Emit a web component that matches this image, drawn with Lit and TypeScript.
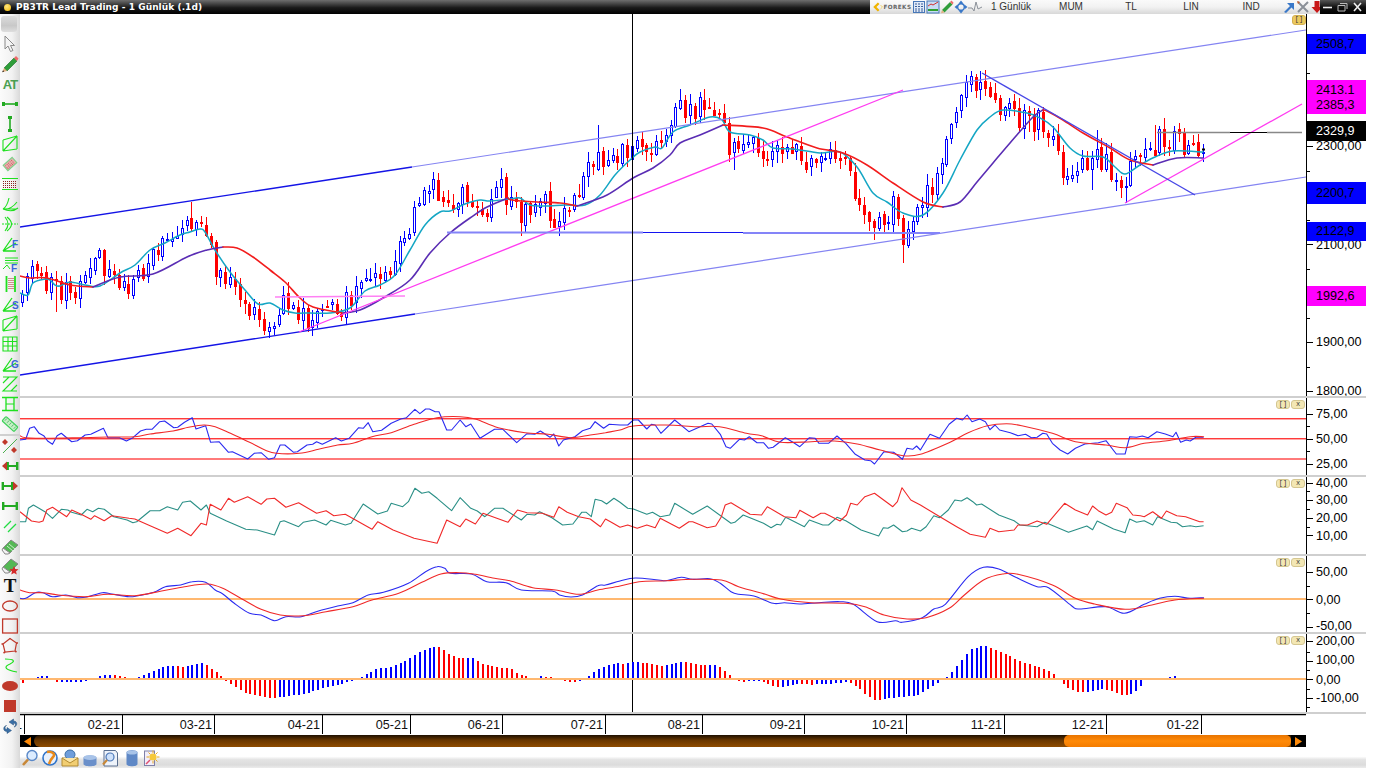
import { LitElement, html, css, svg } from "lit";
import { customElement } from "lit/decorators.js";

type P = [number, number];
const pairs = (a: number[]): P[] => { const o: P[] = []; for (let i = 0; i < a.length; i += 2) o.push([a[i], a[i + 1]]); return o; };
const zoomed = (left: number[], right: number[]): P[] => [
  ...pairs(left).map(([X, Y]) => [20 + X / 2.6133, 395 + Y / 3] as P),
  ...pairs(right).map(([X, Y]) => [620 + X / 2.6133, 395 + Y / 3] as P),
];
const pts = (a: P[]) => a.map(([x, y]) => `${x.toFixed(1)},${y.toFixed(1)}`).join(" ");
const smoothD = (a: P[]) => {
  let d = `M${a[0][0].toFixed(1)} ${a[0][1].toFixed(1)}`;
  for (let i = 0; i < a.length - 1; i++) {
    const p0 = a[Math.max(0, i - 1)], p1 = a[i], p2 = a[i + 1], p3 = a[Math.min(a.length - 1, i + 2)];
    const c1x = p1[0] + (p2[0] - p0[0]) / 6, c1y = p1[1] + (p2[1] - p0[1]) / 6;
    const c2x = p2[0] - (p3[0] - p1[0]) / 6, c2y = p2[1] - (p3[1] - p1[1]) / 6;
    d += `C${c1x.toFixed(1)} ${c1y.toFixed(1)} ${c2x.toFixed(1)} ${c2y.toFixed(1)} ${p2[0].toFixed(1)} ${p2[1].toFixed(1)}`;
  }
  return d;
};
const interp = (a: P[], x: number) => {
  if (x <= a[0][0]) return a[0][1];
  for (let i = 1; i < a.length; i++) if (x <= a[i][0]) {
    const t = (x - a[i - 1][0]) / (a[i][0] - a[i - 1][0] || 1);
    return a[i - 1][1] + t * (a[i][1] - a[i - 1][1]);
  }
  return a[a.length - 1][1];
};

const closes = pairs([20,300,27,275,35,258,50,285,60,290,75,290,85,270,100,260,110,272,130,285,145,265,165,235,180,240,195,210,205,225,215,262,235,295,250,315,270,325,285,305,300,320,320,312,345,305,365,268,385,275,400,245,415,210,430,180,445,200,452,215,465,185,480,215,500,188,520,215,540,195,560,225,575,205,590,165,600,150,612,165,625,150,640,140,650,142,662,150,675,105,690,115,707,100,722,115,730,155,745,135,765,165,785,140,800,160,820,150,845,155,860,200,875,235,895,205,905,245,915,220,930,190,945,150,955,120,965,85,985,85,995,110,1010,112,1025,120,1045,120,1060,165,1070,185,1085,165,1100,155,1110,165,1120,198,1130,165,1150,150,1165,135,1180,140,1190,155,1203,150]);
const extremes = pairs([30,252,58,312,192,202,275,335,600,125,432,172,485,235,520,236,558,233,625,127,707,92,735,170,770,175,875,240,903,263,968,75,982,73,1097,130,1125,203,1157,125,1180,130,1030,132,1092,190]);

const cyan = pairs([20,293,28,295,33,283,45,279,50,280,55,285,60,286,70,282,85,285,100,286,120,273,135,265,150,250,165,243,180,235,190,232,200,229,205,232,215,250,230,272,245,290,258,304,270,303,283,310,295,313,310,313,330,313,350,308,365,291,380,285,395,275,410,250,425,225,440,212,450,211,465,204,480,200,490,201,510,199,520,198,530,205,545,206,565,205,585,205,600,195,615,175,630,160,640,152,655,147,662,148,673,132,690,125,710,117,722,120,730,132,750,135,763,140,773,148,793,149,820,153,840,152,857,167,873,193,887,202,903,213,923,215,943,193,960,160,977,130,990,117,1003,110,1027,113,1040,118,1053,127,1070,148,1083,156,1103,157,1115,167,1125,174,1140,165,1155,157,1173,151,1203,152]);
const maAll = pairs([93,287,120,277,153,274,187,257,207,250,223,247,237,248,253,257,270,270,285,282,300,298,313,307,343,313,360,310,383,298,410,280,430,253,450,233,470,218,487,207,508,198,512,200,537,202,560,203,577,206,607,195,633,178,653,168,670,155,680,143,700,135,723,125,763,128,787,137,817,148,843,153,867,165,893,183,923,202,943,207,960,202,977,182,993,163,1010,143,1033,117,1043,110,1047,111,1063,120,1083,133,1110,148,1130,160,1153,165,1177,158,1203,158]);
const maHead = pairs([20,276,30,278,47,278,70,285,93,287]);
const redRanges: P[] = [[223, 343], [508, 577], [723, 943], [1043, 1153]];
const maSegs = () => {
  const out: { a: P[]; red: boolean }[] = [];
  const cuts = [93, ...redRanges.flat(), 1203];
  for (let i = 0; i < cuts.length - 1; i++) {
    const a = maAll.filter(([x]) => x >= cuts[i] && x <= cuts[i + 1]);
    out.push({ a, red: i % 2 === 1 });
  }
  return out;
};

const rsiB = zoomed([0,135,15,133,25,100,37,95,50,115,62,122,72,138,85,148,97,122,108,115,122,128,135,140,150,137,170,120,185,118,218,100,230,128,260,128,278,138,295,128,315,108,330,103,345,103,365,80,378,78,402,98,412,97,430,82,450,68,460,102,485,92,498,142,520,140,545,172,555,170,595,192,612,175,630,173,650,193,665,188,680,150,692,150,715,172,725,170,750,150,765,148,775,140,790,148,825,128,840,138,860,130,885,98,897,100,910,83,922,110,945,106,970,85,995,72,1010,68,1032,43,1045,56,1060,42,1070,42,1085,50,1095,50,1115,105,1128,105,1150,75,1165,95,1178,87,1202,130,1240,103,1262,103,1298,143,1325,116,1345,118,1360,108,1385,127,1395,117,1408,153,1420,135,1450,125,1470,107,1490,100,1503,80,1525,100,1540,88,1568,90],
  [0,90,20,90,35,75,48,75,70,102,82,88,92,90,107,115,143,75,180,110,230,85,240,87,262,118,277,155,288,160,312,133,325,135,338,125,358,143,375,143,388,160,400,157,432,128,452,142,470,155,495,128,510,130,520,145,545,145,567,123,590,145,615,178,640,195,655,197,665,207,690,170,715,172,738,193,750,160,765,163,775,153,785,165,810,118,835,130,860,88,880,70,895,75,907,60,920,80,940,72,955,80,967,104,980,90,992,105,1020,113,1040,122,1060,118,1075,128,1090,127,1105,115,1115,117,1130,145,1150,165,1170,177,1190,160,1215,147,1250,143,1270,137,1297,177,1320,177,1332,125,1350,127,1365,123,1380,128,1403,110,1425,117,1445,125,1453,112,1465,142,1480,135,1490,138,1505,127,1525,127]);
const rsiR = zoomed([0,122,15,128,80,130,160,128,230,126,300,125,340,117,400,108,440,97,480,90,510,95,550,115,600,142,640,165,670,175,730,175,780,163,830,150,870,145,920,125,970,113,1030,88,1090,68,1150,65,1190,72,1250,98,1320,113,1380,118,1440,128,1490,120,1530,113,1568,105],
  [35,93,120,90,200,95,260,95,330,115,370,122,420,142,500,140,560,138,620,147,680,165,740,182,785,178,860,143,910,113,960,92,1010,86,1050,92,1130,115,1190,140,1270,150,1320,158,1370,145,1430,137,1490,125,1525,125]);
const dmT = zoomed([0,380,15,380,22,340,35,330,65,350,85,370,108,343,125,345,135,352,160,360,175,343,190,350,205,340,220,343,245,365,280,375,295,383,305,380,340,347,365,347,385,335,412,345,425,322,445,318,473,345,487,330,497,355,540,378,590,403,620,405,665,420,680,380,690,377,728,395,740,382,770,375,800,390,812,376,850,390,865,385,897,327,935,357,960,348,970,325,1000,335,1015,320,1032,280,1050,295,1068,290,1090,310,1128,347,1150,308,1178,340,1195,348,1215,365,1240,340,1262,340,1310,375,1325,358,1345,360,1358,350,1390,368,1418,390,1445,387,1468,352,1480,352,1493,365,1503,313,1520,317,1533,327,1552,310,1568,322],
  [0,322,20,340,35,342,70,358,85,352,105,365,130,360,143,325,190,358,228,333,290,385,300,382,322,360,375,385,395,398,410,388,420,390,433,367,482,395,495,375,530,390,545,390,567,367,590,377,630,405,676,423,688,398,700,400,715,390,738,410,750,408,762,400,785,408,800,395,820,362,835,368,858,345,875,315,892,318,907,308,922,320,932,330,945,327,990,360,1030,377,1045,390,1090,395,1110,382,1172,412,1220,393,1235,404,1247,378,1290,402,1320,413,1332,372,1350,382,1370,377,1392,390,1405,365,1440,382,1455,383,1470,395,1490,392,1505,395,1525,392]);
const dmR = zoomed([0,350,30,378,50,382,60,378,70,345,85,337,122,365,135,345,160,358,185,373,195,362,220,377,240,362,285,370,300,372,340,392,385,415,412,400,447,422,473,385,487,390,497,328,525,345,545,310,560,322,595,305,630,328,645,312,665,310,695,337,728,323,775,355,800,347,820,362,850,358,920,403,935,380,975,405,1030,430,1090,445,1115,375,1150,395,1165,372,1190,387,1210,355,1275,382,1300,345,1325,353,1365,355,1395,367,1408,335,1430,352,1460,365,1490,372,1517,395,1530,372,1550,385,1568,397],
  [0,397,20,390,45,400,70,390,92,398,105,370,155,400,180,380,190,380,228,398,250,393,265,365,275,330,290,323,340,358,370,360,385,335,430,365,460,368,470,346,505,368,525,355,535,355,575,378,592,360,603,325,620,330,640,305,665,295,713,335,725,320,737,278,760,315,785,330,825,358,880,395,915,418,955,427,967,400,990,410,1030,405,1040,390,1065,390,1090,378,1115,388,1162,325,1190,345,1222,360,1235,333,1250,347,1270,360,1285,352,1297,325,1325,338,1340,360,1360,362,1370,365,1392,350,1415,370,1428,348,1455,362,1478,365,1515,380,1525,380]);
const macB = zoomed([0,610,15,610,40,593,60,593,85,605,120,600,150,608,175,606,215,593,240,597,285,605,305,603,350,592,380,575,420,570,450,560,485,562,510,585,530,597,560,625,600,655,630,660,665,677,695,665,735,665,780,648,830,633,870,623,910,600,950,592,1015,565,1060,530,1090,515,1110,520,1125,535,1180,537,1220,560,1270,563,1310,585,1390,588,1410,600,1440,606,1470,600,1510,572,1530,570,1568,558],
  [40,549,100,555,120,557,160,547,190,553,235,551,262,565,290,590,310,598,350,603,400,625,430,623,470,627,520,623,575,620,610,628,672,680,720,677,737,682,790,668,820,642,850,628,910,545,950,517,990,522,1040,550,1090,575,1120,578,1180,632,1200,642,1270,635,1318,655,1370,628,1410,610,1450,604,1490,610,1525,608]);
const macR = zoomed([0,585,25,593,60,593,100,600,170,605,230,598,300,602,370,588,430,575,490,567,530,580,580,612,630,643,680,660,740,662,800,650,870,635,920,615,990,595,1050,562,1100,537,1150,533,1190,538,1240,550,1280,557,1340,578,1400,585,1460,598,1510,585,1568,573],
  [50,560,120,557,190,553,265,555,310,575,380,598,420,612,500,623,590,625,640,635,690,660,750,672,800,668,860,640,900,600,950,555,1000,537,1040,538,1130,570,1190,610,1240,627,1320,643,1390,630,1450,615,1525,610]);
const histo = zoomed([0,-10,10,-8,25,0,55,6,70,6,95,-6,130,-5,150,-5,165,-5,190,0,215,10,235,10,265,5,290,0,310,4,370,32,405,38,420,34,435,34,455,40,480,45,495,32,520,12,530,0,545,-8,565,-22,590,-40,620,-48,660,-55,720,-45,735,-45,790,-25,860,-5,880,0,895,5,930,28,970,32,1010,55,1050,82,1085,94,1100,90,1125,68,1150,60,1185,60,1210,40,1250,32,1280,30,1300,14,1325,3,1340,0,1355,6,1390,3,1410,0,1430,-5,1455,-7,1470,0,1490,8,1505,25,1540,40,1568,45],
  [0,40,40,48,60,46,100,38,115,36,160,50,200,42,215,38,250,40,270,25,285,10,300,0,320,-8,340,-3,370,-3,405,-20,430,-20,460,-12,500,-14,560,-10,590,-6,610,-12,640,-42,670,-62,700,-55,780,-45,800,-30,830,-8,850,0,865,15,890,50,915,85,950,98,965,90,1000,75,1040,52,1095,32,1120,20,1135,10,1150,0,1170,-25,1205,-38,1260,-28,1280,-30,1315,-46,1340,-42,1365,-14,1375,0,1435,3,1450,6,1462,3,1475,0]).map(([x, Y]) => [x, (Y - 395) * 3] as P);

const N = 245, X0 = 22, DX = (1203 - 22) / 244;
const barX = (i: number) => Math.round(X0 + i * DX) + 0.5;

function rng(seed: number) {
  return () => {
    seed |= 0; seed = (seed + 0x6d2b79f5) | 0;
    let t = Math.imul(seed ^ (seed >>> 15), 1 | seed);
    t = (t + Math.imul(t ^ (t >>> 7), 61 | t)) ^ t;
    return ((t ^ (t >>> 14)) >>> 0) / 4294967296;
  };
}

function candles() {
  const r = rng(1937);
  let prev = interp(closes, X0 - DX);
  const out: any[] = [];
  for (let i = 0; i < N; i++) {
    const x = barX(i);
    const base = interp(closes, x);
    const close = base + (r() - 0.5) * 24;
    const open = prev + (r() - 0.5) * 5;
    let top = Math.min(open, close) - 1 - r() * 10;
    let bot = Math.max(open, close) + 1 + r() * 10;
    for (const [ex, ey] of extremes) if (Math.abs(ex - x) <= DX / 2) {
      if (ey < top) top = ey;
      if (ey > bot) bot = ey;
    }
    const up = close <= open;
    const y = Math.min(open, close), h = Math.max(1, Math.abs(open - close));
    const col = up ? "#0000ff" : "#ff0000";
    out.push(svg`<line x1=${x} x2=${x} y1=${top} y2=${bot} stroke=${col} />`);
    out.push(up
      ? svg`<rect x=${x - 1} y=${Math.round(y) + 0.5} width="2" height=${Math.round(h)} fill="#fff" stroke=${col} />`
      : svg`<rect x=${x - 1.5} y=${Math.round(y)} width="3" height=${Math.round(h) + 1} fill=${col} />`);
    prev = close;
  }
  return out;
}

function bars() {
  const out: any[] = [];
  let prev = 0;
  for (let i = 0; i < N; i++) {
    const x = barX(i);
    const v = interp(histo, x) / 3;
    const col = v >= prev ? "#0000ff" : "#ff0000";
    prev = v;
    if (Math.abs(v) < 1) continue;
    out.push(svg`<rect x=${x - 1} width="2" y=${v > 0 ? 678 - v : 680} height=${Math.abs(v)} fill=${col} />`);
  }
  return out;
}

const line = (a: P[], c: string, w = 1) => svg`<polyline points=${pts(a)} fill="none" stroke=${c} stroke-width=${w} stroke-linejoin="round" />`;
const curve = (a: P[], c: string, w = 1) => svg`<path d=${smoothD(a)} fill="none" stroke=${c} stroke-width=${w} stroke-linecap="round" />`;
const seg = (x1: number, y1: number, x2: number, y2: number, c: string, w = 1) => svg`<line x1=${x1} y1=${y1} x2=${x2} y2=${y2} stroke=${c} stroke-width=${w} />`;
const CROSS = seg(632.5, 0, 632.5, 768, "#000", 1);
const hl = (y: number, c: string, h = 1) => svg`<rect x="20" y=${y} width="1286" height=${h} fill=${c} shape-rendering="crispEdges" />`;

const mainChart = () => svg`
  <g shape-rendering="crispEdges">${candles()}</g>
  ${curve(cyan, "#14a6c4", 1.5)}
  ${curve(maHead, "#f21c1c", 1.6)}
  ${maSegs().map((s) => curve(s.a, s.red ? "#f21c1c" : "#5a2db4", 1.6))}
  ${seg(20, 227, 412, 167, "#1414e6", 1.4)} ${seg(412, 167, 1306, 30, "#8484f2", 1.2)}
  ${seg(20, 375, 415, 314, "#1414e6", 1.4)} ${seg(415, 314, 1306, 177, "#8484f2", 1.2)}
  ${seg(299, 332, 903, 90, "#ff3cf0", 1.3)} ${seg(1125, 203, 1302, 104, "#ff3cf0", 1.3)}
  ${seg(275, 297, 405, 296, "#ff80f4", 1.6)}
  ${seg(447, 232.5, 643, 232.5, "#8484f8", 2)} ${seg(643, 232.5, 743, 232.5, "#1414f0", 1)} ${seg(743, 233, 940, 233, "#8484f8", 2)}
  ${seg(982, 73, 1195, 195, "#4646e6", 1.4)}
  ${seg(1157, 132.5, 1230, 132.5, "#888", 1.6)} ${seg(1230, 132.5, 1267, 132.5, "#000", 1)} ${seg(1267, 132.5, 1302, 132.5, "#888", 1.6)}
  <rect x="1202" y="148.5" width="3" height="2" fill="#000" />
  ${CROSS}`;

const rsiChart = () => svg`
  ${hl(418, "#ff3a3a")} ${hl(419, "#ffa8a8")} ${hl(438, "#ff3a3a")} ${hl(439, "#ffa8a8")} ${hl(458, "#ff7a7a", 2)}
  ${line(rsiB, "#2a2af0", 1.1)} ${curve(rsiR, "#f02828", 1.1)} ${CROSS}`;
const dmChart = () => svg`${line(dmT, "#2a8f86", 1.1)} ${line(dmR, "#f02828", 1.1)} ${CROSS}`;
const macdChart = () => svg`
  ${hl(598, "#ffb870", 2)} ${curve(macB, "#2a2af0", 1.1)} ${curve(macR, "#f02828", 1.1)} ${CROSS}`;
const histChart = () => svg`
  ${CROSS}<g shape-rendering="crispEdges">${bars()}</g> ${hl(678, "#ffb870", 2)}`;

type Label = { y: number; t: string };
const axis = (ticks: number[], minor: number[], labels: Label[], extras: any = null) => svg`
  <line x1="1306.5" x2="1306.5" y1="0" y2="768" stroke="#000" />
  <g shape-rendering="crispEdges">
    ${ticks.map((y) => svg`<line x1="1306" x2="1313" y1=${y + 0.5} y2=${y + 0.5} stroke="#000" />`)}
    ${minor.map((y) => svg`<line x1="1306" x2="1310" y1=${y + 0.5} y2=${y + 0.5} stroke="#000" />`)}
  </g>
  ${labels.map((l) => svg`<text class="ax" x="1316" y=${l.y + 4}>${l.t}</text>`)}
  ${extras}`;

const tag = (y1: number, y2: number, bg: string, texts: [number, string][], fg = "#000") => svg`
  <rect x="1307" y=${y1} width="59" height=${y2 - y1} fill=${bg} />
  ${texts.map(([y, t]) => svg`<text class="ax" x="1316" y=${y + 4} fill=${fg}>${t}</text>`)}`;

const G = "#1fe01f", D = "#22aa22", R = "#c0392b";
const railIcons: any[] = [
  svg`<path d="M4 1 L4 14 L7 11 L9.5 16.5 L12 15.5 L9.5 10.5 L13.5 10.5 Z" fill="#f4f4f4" stroke="#8a8a8a" />`,
  svg`<path d="M3 13 L13 3 L16 6 L6 16 Z" fill="#2f9e3a" stroke="#1b6a25" stroke-width=".6" /><path d="M13 3 L15 1 L17.5 3.5 L16 6 Z" fill="#ef6a6a" /><path d="M3 13 L1.2 17.3 L6 16 Z" fill="#e2b080" /><path d="M1.2 17.3 L2 15.2 L3.2 16.6 Z" fill="#222" />`,
  svg`<text x="9" y="13.5" text-anchor="middle" font-family="Liberation Sans" font-weight="700" font-size="13" letter-spacing="-1" fill="#4a9f52">AT</text>`,
  svg`<path d="M2 9 H16" stroke=${D} stroke-width="1.6" /><rect x="1" y="7" width="3" height="4" fill=${D} /><rect x="14" y="7" width="3" height="4" fill=${D} />`,
  svg`<path d="M9 2 V16" stroke=${D} stroke-width="1.6" /><rect x="7" y="1" width="4" height="3" fill=${D} /><rect x="7" y="14" width="4" height="3" fill=${D} />`,
  svg`<path d="M2 5 L16 1 M2 16 L16 14 M2 5 V16 M2 16 L16 1 M16 1 V14" fill="none" stroke=${G} stroke-width="1.1" />`,
  svg`<g transform="rotate(-42 9 9)"><rect x="3" y="5.5" width="12" height="7" fill="#eab0b0" stroke="#7fd08a" stroke-width="1.1" /><path d="M4 7.5H14M4 9.5H14M4 11H14" stroke="#c86060" stroke-dasharray="1 1" /></g>`,
  svg`<path d="M1 3.5H17M1 14.5H17" stroke=${G} stroke-width="1.1" /><path d="M2 6.5H16M2 8.5H16M2 10.5H16M2 12.5H16" stroke="#8b2222" stroke-dasharray="1 1" />`,
  svg`<path d="M2 14 Q10 15 16 7 M2 14 Q6 12 8 3 M2 14 H16 M2 14 Q11 18 17 13" fill="none" stroke=${G} stroke-width="1.1" />`,
  svg`<path d="M4 2 Q10 9 4 16 M6 2 Q15 9 6 16 " fill="none" stroke=${G} stroke-width="1.1" /><path d="M1 9H17" stroke=${G} stroke-dasharray="2 1" />`,
  svg`<path d="M2 16 L11 3 M2 16 L15 8 M2 16 L15 16" stroke=${G} stroke-width="1.3" /><text x="11" y="13" font-family="Liberation Sans" font-weight="700" font-size="10" fill="#3a66d8">F</text>`,
  svg`<path d="M4 3H17M4 5.5H17M4 8H17" stroke=${G} stroke-width="1" /><path d="M2 14 L6 10 L9 14" fill="none" stroke=${G} /><text x="10" y="16.5" font-family="Liberation Sans" font-weight="700" font-size="10" fill="#3a66d8">F</text>`,
  svg`<path d="M5.5 1V17M14 1V17" stroke=${G} stroke-width="1.8" /><path d="M8 3V15M10 3V15M12 3V15" stroke="#b02828" stroke-dasharray="1 1" />`,
  svg`<path d="M2 16 L11 3 M2 16 L15 8 M2 16 L15 16" stroke=${G} stroke-width="1.3" /><text x="11" y="14" font-family="Liberation Sans" font-weight="700" font-size="10" fill="#3a66d8">S</text>`,
  svg`<path d="M2 5 L16 1 M2 16 L16 14 M2 5 V16 M2 16 L16 1 M16 1 V14" fill="none" stroke=${G} stroke-width="1.1" />`,
  svg`<path d="M2 2 H16 V16 H2 Z M2 6.5H16 M2 11H16 M7 2V16 M11.5 2V16" fill="none" stroke=${G} stroke-width="1.1" />`,
  svg`<path d="M2 16 L11 3 M2 16 L15 8 M2 16 L15 16" stroke=${G} stroke-width="1.3" /><text x="10" y="13" font-family="Liberation Sans" font-weight="700" font-size="10" fill="#3a66d8">G</text>`,
  svg`<path d="M2 2 H16 L2 16 H16 M2 8 L8 2 M10 16 L16 10" fill="none" stroke=${G} stroke-width="1.1" />`,
  svg`<path d="M1 2.5H17M1 15.5H17M5 2.5V15.5M13 2.5V15.5" fill="none" stroke=${G} stroke-width="1.3" /><path d="M5 9H13" stroke=${G} />`,
  svg`<g transform="rotate(42 9 9)"><rect x="1" y="6" width="16" height="6" rx="1" fill="#c4f0c4" stroke="#3fd05a" stroke-width="1.2" /><path d="M3 7V10M6 7V10M9 7V10M12 7V10M15 7V10" stroke="#3fa05a" stroke-width=".7" /></g>`,
];
const railIcons2: any[] = [
  svg`<path d="M2 16 L16 2" stroke="#4caf50" /><path d="M4 2 L7 5 L4 8 L1 5 Z M13 10 L16 13 L13 16 L10 13 Z" fill="#c0392b" />`,
  svg`<path d="M6 9H17" stroke=${D} stroke-width="2" /><rect x="15" y="5" width="2.4" height="8" fill=${D} /><rect x="5.5" y="5" width="2.4" height="8" fill=${D} /><path d="M1 9 L6 4.5 V13.5 Z" fill="#c0392b" />`,
  svg`<path d="M1 9H12" stroke=${D} stroke-width="2" /><rect x="0.6" y="5" width="2.4" height="8" fill=${D} /><rect x="10" y="5" width="2.4" height="8" fill=${D} /><path d="M17 9 L12 4.5 V13.5 Z" fill="#c0392b" />`,
  svg`<path d="M2 9H16" stroke=${D} stroke-width="2" /><rect x="1" y="5" width="2.4" height="8" fill=${D} /><rect x="14.6" y="5" width="2.4" height="8" fill=${D} />`,
  svg`<path d="M3 11 L10 4 M7 15 L15 7" stroke="#22dd44" stroke-width="1.3" />`,
  svg`<path d="M2 11 L10 3 L17 8 L9 16 Z" fill="#55b855" stroke="#888" /><path d="M2 11 L9 16 L7 17 H4 L1 13 Z" fill="#f4f4f4" stroke="#888" /><path d="M6 9L12 14M8 7L14 12" stroke="#cceecc" />`,
  svg`<path d="M2 10 L10 2 L17 7 L9 15 Z" fill="#55b855" stroke="#888" /><path d="M2 10 L9 15 L7 16 H4 L1 12 Z" fill="#f4f4f4" stroke="#888" /><path d="M13 9 L14.3 12 L17.5 12.3 L15 14.4 L15.8 17.6 L13 16 L10.2 17.6 L11 14.4 L8.5 12.3 L11.7 12 Z" fill="#d42c2c" />`,
  svg`<text x="9" y="15" text-anchor="middle" font-family="Liberation Serif" font-weight="700" font-size="19" fill="#111">T</text>`,
  svg`<ellipse cx="9" cy="9" rx="7.4" ry="5" fill="none" stroke=${R} stroke-width="1.3" />`,
  svg`<rect x="1.6" y="2" width="14.8" height="14" fill="none" stroke=${R} stroke-width="1.3" />`,
  svg`<path d="M2 7 L9 1.5 L15.5 6 L14 14 L4 15 Z" fill="none" stroke=${R} stroke-width="1.2" /><path d="M2 7 H0.5 M9 1.5 V1 M15.5 6 H17 M14 14 L15.5 15 M4 15 L2.5 16" stroke=${R} stroke-width="1.6" />`,
  svg`<path d="M4 2 C13 2 15 4 9 7 C2 10 4 13 16 15" fill="none" stroke=${G} stroke-width="1.2" />`,
  svg`<ellipse cx="9" cy="9" rx="8" ry="5" fill=${R} />`,
  svg`<rect x="3" y="3" width="12" height="12" fill=${R} />`,
  svg`<path d="M12.5 2 L8 5 L12.5 8 V6 C15 6 15 9 13 10 C16.5 9.5 17 4 12.5 4 Z M6 16.5 L10.5 13.5 L6 10.5 V12.5 C3.5 12.5 3.5 9.5 5.5 8.5 C2 9 1.5 14.5 6 14.5 Z" fill="#3a6ea5" stroke="#26517d" stroke-width=".5" />`,
];

const topIcons = html`
  <svg class="logo" viewBox="0 0 42 14"><path d="M7 3 L3 7 L7 11" fill="none" stroke="#f0b400" stroke-width="2.4" /><path d="M9 5 L11 7 L9 9" fill="none" stroke="#f0d060" stroke-width="1" /><text x="12" y="9.5" font-family="DejaVu Sans" font-weight="700" font-size="6" fill="#666" textLength="29">FOREKS</text></svg>
  <svg class="ti" viewBox="0 0 14 14"><rect x="1.5" y="1.5" width="11" height="11" fill="#dfe9f8" stroke="#4878b8" /><path d="M3 4H11M3 6.5H11M3 9H11M3 11H11" stroke="#3a5f98" stroke-dasharray="2 1" /></svg>
  <svg class="ti" viewBox="0 0 14 14"><rect x="1" y="1" width="12" height="12" fill="#c8dcf4" stroke="#4878b8" /><path d="M2 6 L5 4 L7 5 L12 2" fill="none" stroke="#d03030" /><path d="M2 10 H12" stroke="#30a030" stroke-width="2" /></svg>
  <svg class="ti" viewBox="0 0 14 14"><path d="M2 10 L10 2 L12.5 4.5 L4.5 12.5 Z" fill="#2f9e3a" /><path d="M10 2 L11.5 .6 L13.6 2.8 L12.5 4.5 Z" fill="#ef6a6a" /><path d="M2 10 L1 13.2 L4.5 12.5 Z" fill="#e2b080" /></svg>
  <svg class="ti" viewBox="0 0 14 14"><circle cx="7" cy="7" r="3.4" fill="none" stroke="#3a78c8" stroke-width="1.6" /><path d="M7 .5 L9 3 H5 Z M7 13.5 L9 11 H5 Z M.5 7 L3 5 V9 Z M13.5 7 L11 5 V9 Z" fill="#3a78c8" /></svg>
  <svg class="ti" viewBox="0 0 14 14"><path d="M0 8 H4 L6 11 L8 2 L10 9 L14 7" fill="none" stroke="#8a9098" /></svg>`;

const bottomIcons = html`
  <svg class="bi" viewBox="0 0 18 18"><circle cx="11" cy="6.5" r="5" fill="#dcecff" stroke="#5a88c8" stroke-width="1.4" /><path d="M7 10.5 L2 16" stroke="#c88838" stroke-width="2.6" /></svg>
  <svg class="bi" viewBox="0 0 18 18"><circle cx="9" cy="9" r="7" fill="#e8f0fb" stroke="#2f73c9" stroke-width="1.6" /><path d="M6 3 C11 2 15 5 12 8 C10 10 9 12 8 15" fill="none" stroke="#e98a1b" stroke-width="2.6" /></svg>
  <svg class="bi" viewBox="0 0 18 18"><path d="M1 9 H17 V17 H1 Z" fill="#f2ce72" stroke="#b18a30" /><ellipse cx="9" cy="5.6" rx="5" ry="4.6" fill="#6f9edb" stroke="#3a6ea5" /><path d="M1 9 L9 14 L17 9" fill="#fbe6a8" stroke="#b18a30" /></svg>
  <svg class="bi" viewBox="0 0 18 18"><path d="M2.5 9 C2.5 5.5 15.5 5.5 15.5 9 V15 C15.5 18 2.5 18 2.5 15 Z" fill="#6b90ca" /><ellipse cx="9" cy="8.5" rx="6.5" ry="2.4" fill="#a8c3e8" /></svg>
  <svg class="bi" viewBox="0 0 18 18"><path d="M3 1.5 H14.5 L16.5 4 V17 H3 Z" fill="#eef3fa" stroke="#5a6f90" /><circle cx="9" cy="8" r="4" fill="#cfe2fb" stroke="#4c78b8" stroke-width="1.2" /><path d="M6 11 L2 15.5" stroke="#c88838" stroke-width="2.2" /></svg>
  <svg class="bi wide" viewBox="0 0 18 18"><path d="M3.5 3.5 C3.5 .5 14.5 .5 14.5 3.5 V15 C14.5 18 3.5 18 3.5 15 Z" fill="#5f88c6" /><ellipse cx="9" cy="3.5" rx="5.5" ry="2" fill="#a8c3e8" /></svg>
  <svg class="bi" viewBox="0 0 18 18"><rect x="1.5" y="2" width="10" height="14.5" fill="#f2eefa" stroke="#7f80a8" /><circle cx="10" cy="8" r="3.6" fill="#f6c93a" /><path d="M10 1.5V4M10 12V14.5M3.5 8H6M14 8H16.5M5.5 3.5L7.3 5.3M12.7 10.7L14.5 12.5M14.5 3.5L12.7 5.3M7.3 10.7L5.5 12.5" stroke="#e8a820" /><path d="M3 15 L7 11" stroke="#e05070" stroke-width="1.5" /></svg>`;

const monthTicks: [number, string][] = [[24,"1"],[122,"02-21"],[214,"03-21"],[322,"04-21"],[410,"05-21"],[502,"06-21"],[605,"07-21"],[702,"08-21"],[804,"09-21"],[906,"10-21"],[1004,"11-21"],[1106,"12-21"],[1201,"01-22"]];

@customElement("app-root")
export class AppRoot extends LitElement {
  static styles = css`
    :host { display: block; width: 1380px; height: 768px; background: #fff; overflow: hidden; font-family: "Liberation Sans", sans-serif; }
    .frame { width: 1366px; height: 768px; display: flex; flex-direction: column; }
    .title { height: 14px; display: flex; flex: none; }
    .cap { width: 870px; display: flex; align-items: center; background: linear-gradient(#6e6e6e, #1a1a1a 55%, #000); color: #fff; font: 700 9px/14px "DejaVu Sans", sans-serif; letter-spacing: .06px; }
    .dot { width: 7px; height: 7px; border-radius: 50%; background: radial-gradient(circle at 40% 35%, #ffe680, #f0b400); margin: 0 5px 0 4px; }
    .tools { width: 450px; display: flex; align-items: center; background: linear-gradient(#fafafa, #f2f2f2 50%, #d8d8d8); }
    .logo { width: 40px; height: 14px; margin-left: 2px; flex: none; }
    .ti { width: 14px; height: 14px; flex: none; }
    .lead { display: flex; align-items: center; width: 111px; flex: none; }
    .cell { width: 60px; text-align: center; font-size: 10px; line-height: 14px; color: #333; flex: none; }
    .right { display: flex; align-items: center; margin-left: 1px; }
    .win { width: 46px; display: flex; align-items: center; background: linear-gradient(#555, #111 50%, #000); }
    .win svg { width: 15px; height: 14px; flex: none; }
    .body { flex: 1; display: flex; min-height: 0; }
    .rail { width: 20px; flex: none; background: linear-gradient(90deg, #fbfbfb, #f2f2f2 60%, #d9d9d9); display: flex; flex-direction: column; }
    .row { height: 20px; flex: none; display: flex; align-items: center; justify-content: center; }
    .row svg { width: 18px; height: 18px; overflow: visible; }
    .btn { width: 16px; height: 16px; margin-left: -2px; border-radius: 3px; background: linear-gradient(#dcdcdc, #c8c8c8 60%, #dedede); }
    .rsep { height: 2px; flex: none; background: #d0d0d0; }
    .col { width: 1346px; display: flex; flex-direction: column; }
    .pane { display: flex; flex: none; position: relative; }
    .pane svg { display: block; }
    .gap { height: 2px; flex: none; background: #cfcfcf; }
    .chips { position: absolute; display: flex; gap: 1px; top: 2px; left: 1256px; }
    .chip { width: 14px; height: 9px; box-sizing: border-box; border: 1px solid #d4c690; border-radius: 3px; background: #f3e7b4; font: 7px/7px "Liberation Mono", monospace; color: #333; text-align: center; }
    .chip.one { position: absolute; left: 1272px; top: 1px; height: 10px; background: #ecc95f; border-color: #d4b050; }
    text.ax { font: 12.6px "Liberation Sans", sans-serif; }
    text.dt { font: 12.6px "Liberation Sans", sans-serif; fill: #111; text-anchor: end; }
    .dateaxis { display: block; flex: none; }
    .scroll { height: 12px; flex: none; width: 1286px; display: flex; background: #000; }
    .end { width: 14px; flex: none; display: flex; align-items: center; justify-content: center; }
    .end.r { width: 15px; }
    .end svg { width: 7px; height: 9px; }
    .track { flex: 1; display: flex; background: linear-gradient(#1e0f00, #6b3800 45%, #8f4c00); border-radius: 6px 0 0 6px; }
    .thumb { margin-left: 1030px; width: 227px; background: linear-gradient(#e87400, #ff8a08 50%, #f47c00); border-radius: 5px; }
    .bottom { height: 21px; flex: none; display: flex; align-items: center; padding-left: 1px; background: linear-gradient(#fff, #fff 45%, #e4e4e4 60%, #dcdcdc 85%, #ececec); gap: 2px; }
    .bi { width: 18px; height: 18px; flex: none; }
    .bi.wide { margin-left: 2px; }
  `;

  private pane(top: number, h: number, plot: any, ax: any, chips = 2) {
    return html`<div class="pane">
      <svg width="1286" height=${h} viewBox="20 ${top} 1286 ${h}">${plot}</svg>
      <svg width="60" height=${h} viewBox="1306 ${top} 60 ${h}">${ax}</svg>
      ${chips === 2
        ? html`<div class="chips"><div class="chip">[]</div><div class="chip">x</div></div>`
        : html`<div class="chip one">[]</div>`}
    </div>`;
  }

  render() {
    const mainAxis = axis([146, 244, 342, 391, 195, 97, 48, 293], [171, 220, 122, 269, 318, 367, 73], [
      { y: 146, t: "2300,00" }, { y: 245, t: "2100,00" }, { y: 342, t: "1900,00" }, { y: 390.5, t: "1800,00" },
    ], svg`
      ${tag(34, 54, "#0000ff", [[44, "2508,7"]])}
      ${tag(80, 114, "#ff00ff", [[90, "2413.1"], [105, "2385,3"]])}
      ${tag(121, 141, "#000000", [[131, "2329,9"]], "#fff")}
      ${tag(182, 204, "#0000ff", [[193, "2200,7"]])}
      ${tag(222, 241, "#0000ff", [[231, "2122,9"]])}
      ${tag(286, 306, "#ff00ff", [[296, "1992,6"]])}
    `);
    return html`<div class="frame">
      <div class="title">
        <div class="cap"><span class="dot"></span>PB3TR Lead Trading - 1 Günlük (.1d)</div>
        <div class="tools">
          <div class="lead">${topIcons}</div>
          <div class="cell">1 Günlük</div><div class="cell">MUM</div><div class="cell">TL</div><div class="cell">LIN</div><div class="cell">IND</div>
          <div class="right">
            <svg class="ti" viewBox="0 0 14 14"><path d="M2 12 L8 6 L5 3 H12 V10 L9.5 7.5 L4 13 Z" fill="#3a78c8" /></svg>
            <svg class="ti" viewBox="0 0 14 14"><path d="M2 2 L12 12 M12 2 L2 12" stroke="#8a9098" stroke-width="2" /><path d="M1 1 L4 2 L2 4 Z" fill="#c86030" /></svg>
            <svg class="ti" viewBox="0 0 14 14"><path d="M4.5 1 H9.5 V7 H12.5 L7 13 L1.5 7 H4.5 Z" fill="#c81818" /></svg>
          </div>
        </div>
        <div class="win">
          <svg viewBox="0 0 15 14"><path d="M3 7.5 H12" stroke="#eee" stroke-width="1.6" /></svg>
          <svg viewBox="0 0 15 14"><path d="M5 3.5 H12 V9 M3 5.5 H10 V11 H3 Z" fill="none" stroke="#bbb" /></svg>
          <svg viewBox="0 0 15 14"><path d="M4 3 L11 11 M11 3 L4 11" stroke="#eee" stroke-width="1.6" /></svg>
        </div>
      </div>
      <div class="body">
        <div class="rail">
          <div class="row"><div class="btn"></div></div>
          ${railIcons.map((i) => html`<div class="row"><svg viewBox="0 0 18 18">${i}</svg></div>`)}
          <div class="rsep"></div>
          ${railIcons2.map((i) => html`<div class="row"><svg viewBox="0 0 18 18">${i}</svg></div>`)}
        </div>
        <div class="col">
          ${this.pane(14, 382, mainChart(), mainAxis, 1)}
          <div class="gap"></div>
          ${this.pane(398, 77, rsiChart(), axis([414, 439, 464], [426, 451], [{ y: 414, t: "75,00" }, { y: 439, t: "50,00" }, { y: 464, t: "25,00" }]))}
          <div class="gap"></div>
          ${this.pane(477, 77, dmChart(), axis([483, 500, 518, 535], [491, 509, 527], [{ y: 483, t: "40,00" }, { y: 500, t: "30,00" }, { y: 518, t: "20,00" }, { y: 536, t: "10,00" }]))}
          <div class="gap"></div>
          ${this.pane(556, 76, macdChart(), axis([572, 599, 627], [586, 613], [{ y: 572, t: "50,00" }, { y: 600, t: "0,00" }, { y: 625.5, t: "-50,00" }]))}
          <div class="gap"></div>
          ${this.pane(634, 78, histChart(), axis([641, 661, 679, 698], [652, 670, 689, 707], [{ y: 641, t: "200,00" }, { y: 660, t: "100,00" }, { y: 680, t: "0,00" }, { y: 698, t: "-100,00" }]))}
          <div class="gap"></div>
          <svg class="dateaxis" width="1286" height="21" viewBox="20 714 1286 21">
            <line x1="20" x2="1306" y1="714.5" y2="714.5" stroke="#000" stroke-width="1.4" />
            <g shape-rendering="crispEdges">${monthTicks.map(([x]) => svg`<line x1=${x + 0.5} x2=${x + 0.5} y1="714" y2="734" stroke="#000" />`)}</g>
            ${monthTicks.map(([x, t]) => svg`<text class="dt" x=${x - 2} y="729">${t}</text>`)}
          </svg>
          <div class="scroll">
            <div class="end"><svg viewBox="0 0 7 9"><path d="M7 0 V9 L0 4.5 Z" fill="#ff8a08" /></svg></div>
            <div class="track"><div class="thumb"></div></div>
            <div class="end r"><svg viewBox="0 0 7 9"><path d="M0 0 V9 L7 4.5 Z" fill="#ff8a08" /></svg></div>
          </div>
          <div class="bottom">${bottomIcons}</div>
        </div>
      </div>
    </div>`;
  }
}
